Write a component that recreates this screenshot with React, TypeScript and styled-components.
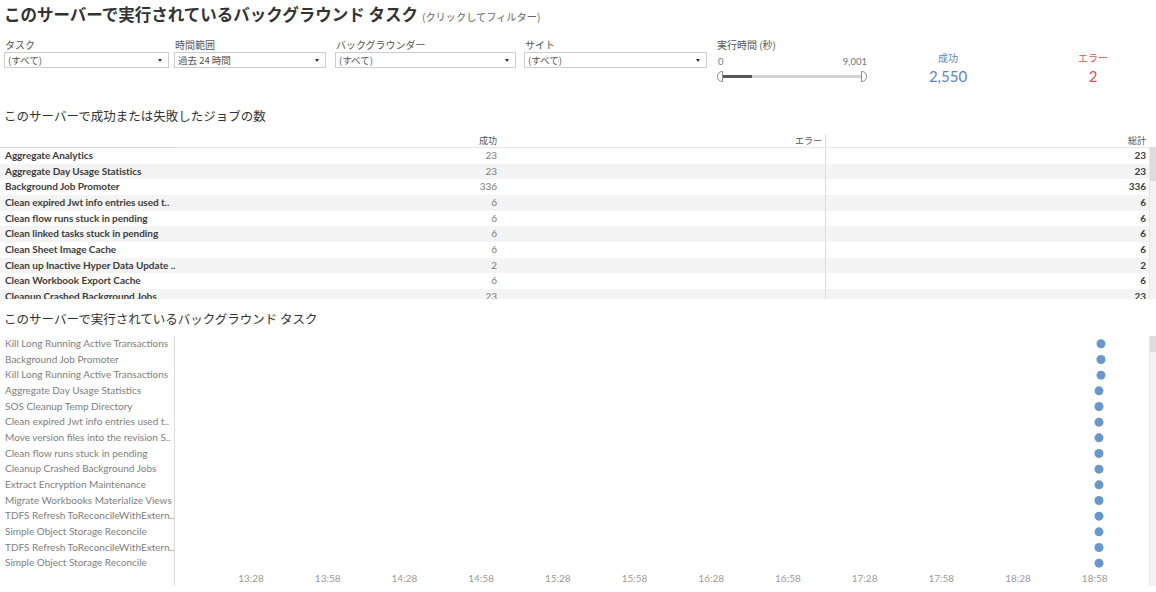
import React from "react";
import styled, { createGlobalStyle } from "styled-components";

const GlobalStyle = createGlobalStyle`
  html, body {
    margin: 0;
    padding: 0;
    background: #ffffff;
    overflow: hidden;
  }
  body {
    font-family: Lato, "Noto Sans", "Noto Sans CJK JP", sans-serif;
    color: #333333;
  }
`;

const jobs = [
  { name: "Aggregate Analytics", ok: 23, total: 23 },
  { name: "Aggregate Day Usage Statistics", ok: 23, total: 23 },
  { name: "Background Job Promoter", ok: 336, total: 336 },
  { name: "Clean expired Jwt info entries used t..", ok: 6, total: 6 },
  { name: "Clean flow runs stuck in pending", ok: 6, total: 6 },
  { name: "Clean linked tasks stuck in pending", ok: 6, total: 6 },
  { name: "Clean Sheet Image Cache", ok: 6, total: 6 },
  { name: "Clean up Inactive Hyper Data Update ..", ok: 2, total: 2 },
  { name: "Clean Workbook Export Cache", ok: 6, total: 6 },
  { name: "Cleanup Crashed Background Jobs", ok: 23, total: 23 },
];

const tasks = [
  "Kill Long Running Active Transactions",
  "Background Job Promoter",
  "Kill Long Running Active Transactions",
  "Aggregate Day Usage Statistics",
  "SOS Cleanup Temp Directory",
  "Clean expired Jwt info entries used t..",
  "Move version files into the revision S..",
  "Clean flow runs stuck in pending",
  "Cleanup Crashed Background Jobs",
  "Extract Encryption Maintenance",
  "Migrate Workbooks Materialize Views",
  "TDFS Refresh ToReconcileWithExtern..",
  "Simple Object Storage Reconcile",
  "TDFS Refresh ToReconcileWithExtern..",
  "Simple Object Storage Reconcile",
];

const ticks = ["13:28", "13:58", "14:28", "14:58", "15:28", "15:58", "16:28", "16:58", "17:28", "17:58", "18:28", "18:58"];

const ROW_H = 15.67;
const PLOT_W = 974;

const Page = styled.div`
  width: 1156px;
  height: 592px;
  overflow: hidden;
`;

const Title = styled.h1`
  margin: 2px 0 0;
  padding-left: 4px;
  font-family: "Noto Sans CJK JP", sans-serif;
  font-size: 16.5px;
  line-height: 24px;
  font-weight: 700;
  color: #333333;
  white-space: nowrap;
`;

const TitleHint = styled.span`
  margin-left: 4px;
  font-size: 10.2px;
  font-weight: 400;
  color: #666666;
`;

const FilterBar = styled.div`
  display: flex;
  align-items: flex-start;
  height: 46px;
  margin-top: 9px;
  padding-left: 4px;
`;

const Filter = styled.div<{ $w: number; $gap: number }>`
  width: ${(p) => p.$w}px;
  margin-right: ${(p) => p.$gap}px;
  flex: none;
`;

const FilterLabel = styled.div`
  font-family: "Noto Sans CJK JP", sans-serif;
  font-size: 10px;
  line-height: 14px;
  color: #555555;
  padding-left: 1px;
`;

const Select = styled.div`
  display: flex;
  align-items: center;
  justify-content: space-between;
  height: 14px;
  border: 1px solid #cccccc;
  background: #ffffff;
  padding: 0 6px 0 3px;
  font-family: "Noto Sans CJK JP", sans-serif;
  font-size: 9.5px;
  color: #555555;
`;

const Caret = styled.span`
  width: 0;
  height: 0;
  border-left: 2.5px solid transparent;
  border-right: 2.5px solid transparent;
  border-top: 3px solid #333333;
`;

const SliderBlock = styled.div`
  width: 152px;
  flex: none;
`;

const SliderEnds = styled.div`
  display: flex;
  justify-content: space-between;
  padding: 0 1px 0 2px;
  font-size: 9.5px;
  line-height: 13px;
  margin-top: 3px;
  color: #777777;
`;

const SliderTrack = styled.div`
  position: relative;
  height: 3px;
  margin: 7px 2px 0 2px;
  background: #d3d3d3;
`;

const SliderFill = styled.div`
  position: absolute;
  left: 5px;
  top: 0;
  width: 29px;
  height: 3px;
  background: #555555;
`;

const Handle = styled.div<{ $side: "left" | "right" }>`
  position: absolute;
  top: -4px;
  ${(p) => (p.$side === "left" ? "left: -1px;" : "right: -1px;")}
  width: 6px;
  height: 11px;
  box-sizing: border-box;
  background: #ffffff;
  border: 1px solid #8a8a8a;
  border-radius: ${(p) => (p.$side === "left" ? "5px 0 0 5px" : "0 5px 5px 0")};
`;

const Kpi = styled.div<{ $w: number; $ml: number; $color: string }>`
  width: ${(p) => p.$w}px;
  margin-left: ${(p) => p.$ml}px;
  padding-top: 13px;
  flex: none;
  text-align: center;
  color: ${(p) => p.$color};
`;

const KpiLabel = styled.div`
  font-family: "Noto Sans CJK JP", sans-serif;
  font-size: 10px;
  line-height: 14px;
`;

const KpiValue = styled.div`
  font-size: 15px;
  line-height: 20px;
  margin-top: 1px;
`;

const SectionTitle = styled.h2<{ $mt: number }>`
  margin: ${(p) => p.$mt}px 0 0;
  padding-left: 4px;
  font-family: "Noto Sans CJK JP", sans-serif;
  font-size: 12.5px;
  line-height: 18px;
  font-weight: 400;
  color: #333333;
  white-space: nowrap;
`;

const Table = styled.div`
  display: grid;
  grid-template-columns: 1fr 7px;
  margin-top: 9px;
`;

const TableMain = styled.div``;

const Cols = `
  display: grid;
  grid-template-columns: 175px 325px 326px 323px;
`;

const HeaderRow = styled.div`
  ${Cols}
  height: 13px;
  border-bottom: 1px solid #e6e6e6;
`;

const HeadCell = styled.div<{ $divider?: boolean; $edge?: boolean }>`
  text-align: right;
  padding-right: 3px;
  font-family: "Noto Sans CJK JP", sans-serif;
  font-size: 9px;
  line-height: 13px;
  color: #555555;
  ${(p) => (p.$divider ? "border-right: 1px solid #dddddd;" : "")}
  ${(p) => (p.$edge ? "box-shadow: 0 1px 0 #d4d4d4;" : "")}
`;

const TableBody = styled.div`
  height: 151px;
  overflow: hidden;
`;

const Row = styled.div<{ $shade: boolean }>`
  ${Cols}
  height: ${ROW_H}px;
  background: ${(p) => (p.$shade ? "#f4f4f4" : "#ffffff")};
`;

const Cell = styled.div<{ $align?: "left" | "right"; $tone?: "label" | "muted" | "strong"; $divider?: boolean }>`
  text-align: ${(p) => p.$align ?? "right"};
  padding: ${(p) => (p.$align === "left" ? "0 0 0 5px" : "0 3px 0 0")};
  font-size: 10px;
  letter-spacing: -0.05px;
  line-height: ${ROW_H}px;
  white-space: nowrap;
  overflow: hidden;
  font-weight: ${(p) => (p.$tone === "muted" ? 400 : 700)};
  color: ${(p) => (p.$tone === "muted" ? "#7a7a7a" : "#3c3c3c")};
  ${(p) => (p.$divider ? "border-right: 1px solid #dddddd;" : "")}
`;

const ScrollTrack = styled.div<{ $top: number }>`
  margin-top: ${(p) => p.$top}px;
  background: #f3f3f3;
  border-left: 1px solid #e8e8e8;
`;

const ScrollThumb = styled.div<{ $h: number }>`
  height: ${(p) => p.$h}px;
  background: #dcdcdc;
`;

const Chart = styled.div`
  display: grid;
  grid-template-columns: 175px ${PLOT_W}px 7px;
  height: 250px;
  margin-top: 8px;
`;

const AxisLabels = styled.div`
  border-right: 1px solid #dddddd;
`;

const TaskLabel = styled.div`
  height: ${ROW_H}px;
  line-height: ${ROW_H}px;
  padding-left: 5px;
  font-size: 10px;
  color: #808080;
  white-space: nowrap;
  overflow: hidden;
`;

const Plot = styled.svg`
  display: block;
  width: ${PLOT_W}px;
  height: 250px;
`;

export default function App() {
  return (
    <Page>
      <GlobalStyle />
      <Title>
        このサーバーで実行されているバックグラウンド タスク
        <TitleHint>(クリックしてフィルター)</TitleHint>
      </Title>

      <FilterBar>
        <Filter $w={165} $gap={5}>
          <FilterLabel>タスク</FilterLabel>
          <Select>
            <span>(すべて)</span>
            <Caret />
          </Select>
        </Filter>
        <Filter $w={152} $gap={9}>
          <FilterLabel>時間範囲</FilterLabel>
          <Select>
            <span>過去 24 時間</span>
            <Caret />
          </Select>
        </Filter>
        <Filter $w={181} $gap={8}>
          <FilterLabel>バックグラウンダー</FilterLabel>
          <Select>
            <span>(すべて)</span>
            <Caret />
          </Select>
        </Filter>
        <Filter $w={183} $gap={9}>
          <FilterLabel>サイト</FilterLabel>
          <Select>
            <span>(すべて)</span>
            <Caret />
          </Select>
        </Filter>
        <SliderBlock>
          <FilterLabel>実行時間 (秒)</FilterLabel>
          <SliderEnds>
            <span>0</span>
            <span>9,001</span>
          </SliderEnds>
          <SliderTrack>
            <SliderFill />
            <Handle $side="left" />
            <Handle $side="right" />
          </SliderTrack>
        </SliderBlock>
        <Kpi $w={140} $ml={10} $color="#5b86bd">
          <KpiLabel>成功</KpiLabel>
          <KpiValue>2,550</KpiValue>
        </Kpi>
        <Kpi $w={130} $ml={10} $color="#e0534f">
          <KpiLabel>エラー</KpiLabel>
          <KpiValue>2</KpiValue>
        </Kpi>
      </FilterBar>

      <SectionTitle $mt={23}>このサーバーで成功または失敗したジョブの数</SectionTitle>

      <Table>
        <TableMain>
          <HeaderRow>
            <HeadCell $edge />
            <HeadCell>成功</HeadCell>
            <HeadCell $divider>エラー</HeadCell>
            <HeadCell>総計</HeadCell>
          </HeaderRow>
          <TableBody>
            {jobs.map((j, i) => (
              <Row key={j.name} $shade={i % 2 === 1}>
                <Cell $align="left">{j.name}</Cell>
                <Cell $tone="muted">{j.ok}</Cell>
                <Cell $divider />
                <Cell>{j.total}</Cell>
              </Row>
            ))}
          </TableBody>
        </TableMain>
        <ScrollTrack $top={13}>
          <ScrollThumb $h={34} />
        </ScrollTrack>
      </Table>

      <SectionTitle $mt={11}>このサーバーで実行されているバックグラウンド タスク</SectionTitle>

      <Chart>
        <AxisLabels>
          {tasks.map((t, i) => (
            <TaskLabel key={i}>{t}</TaskLabel>
          ))}
        </AxisLabels>
        <Plot viewBox={`0 0 ${PLOT_W} 250`}>
          {tasks.map((_, i) => (
            <circle key={i} cx={i < 3 ? 926 : 924} cy={7.8 + i * ROW_H} r={4.5} fill="#6598cf" />
          ))}
          {ticks.map((t, i) => (
            <text
              key={t}
              x={76 + i * 76.7}
              y={246}
              textAnchor="middle"
              fontSize="10"
              fill="#9a9a9a"
              fontFamily="Lato, 'Noto Sans', sans-serif"
            >
              {t}
            </text>
          ))}
        </Plot>
        <ScrollTrack $top={0}>
          <ScrollThumb $h={16} />
        </ScrollTrack>
      </Chart>
    </Page>
  );
}
